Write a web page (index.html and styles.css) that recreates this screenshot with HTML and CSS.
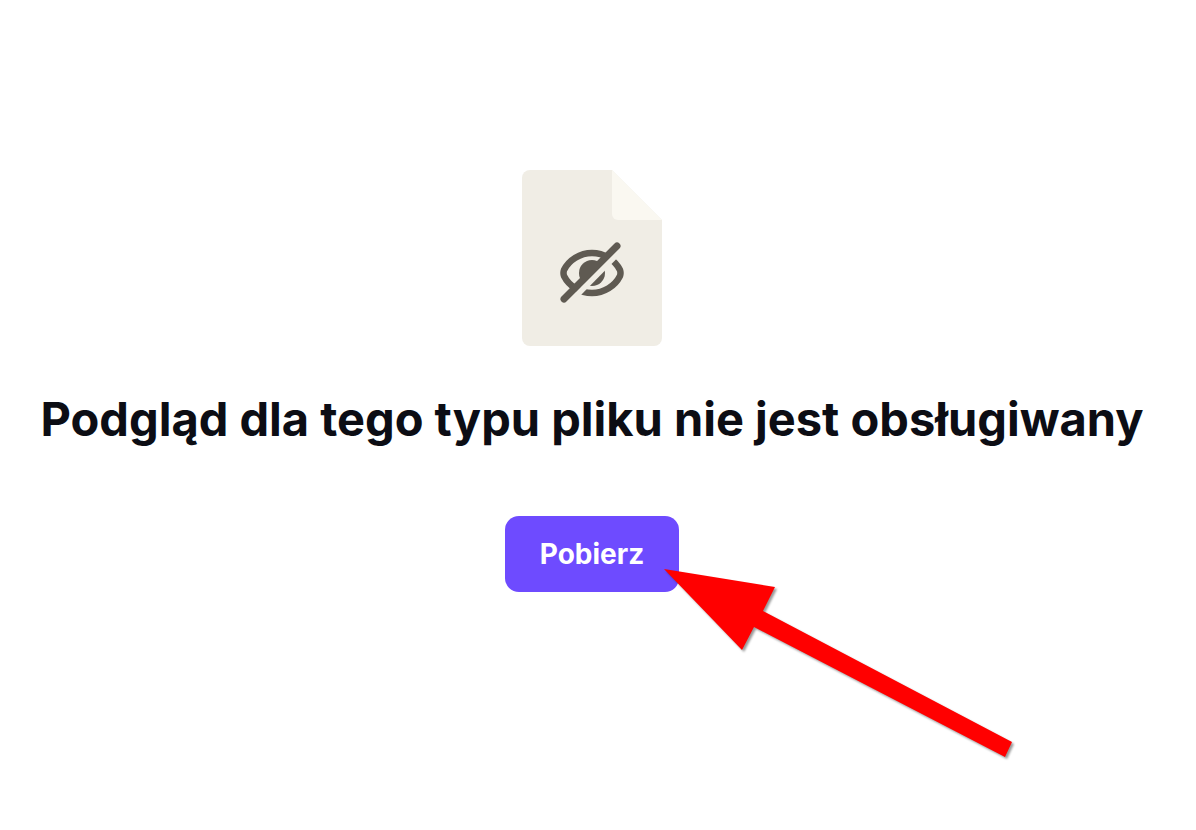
FILE: index.html
```html
<!DOCTYPE html>
<html lang="pl">
<head>
    <meta charset="UTF-8">
    <meta name="viewport" content="width=device-width, initial-scale=1">
    <title>Podgląd pliku</title>
    <link rel="stylesheet" href="styles.css">
</head>
<body>
<main class="preview">
    <svg class="file-icon" viewBox="0 0 140 176" aria-hidden="true">
        <path fill="#f0ede5" d="M8 0H90L140 50V168a8 8 0 0 1-8 8H8a8 8 0 0 1-8-8V8a8 8 0 0 1 8-8z"/>
        <path fill="#faf8f1" d="M90 0L140 50H96a6 6 0 0 1-6-6z"/>
        <!-- crossed out eye -->
        <path fill="none" stroke="#5f5a52" stroke-width="6.5" stroke-linejoin="round" d="M42 100C47 90 58 83 70 83S93 90 98 100Q99 103 98 106C93 116 82 123 70 123S47 116 42 106Q41 103 42 100z"/>
        <circle fill="#5f5a52" cx="70" cy="103" r="13"/>
        <path fill="none" stroke="#f0ede5" stroke-width="6" d="M46 134L100 79"/>
        <path fill="none" stroke="#5f5a52" stroke-width="7" stroke-linecap="round" d="M42 129L95 76"/>
    </svg>
    <h1 class="title">Podgląd dla tego typu pliku nie jest obsługiwany</h1>
    <div class="action">
        <button class="download" type="button">Pobierz</button>
        <svg class="arrow" viewBox="0 0 360 200" aria-hidden="true">
            <path fill="#ff0000" d="M4 4L115 22L103 46L352 177L345 192L94 62L82 85z"/>
        </svg>
    </div>
</main>
</body>
</html>
```
FILE: styles.css
```css
body{
    margin: 0;
    background: #fff;
    color: #0c0d14;
    font-family: Inter, "Liberation Sans", sans-serif;
}
.preview{
    box-sizing: border-box;
    min-height: 100vh;
    display: flex;
    flex-direction: column;
    align-items: center;
    padding: 170px 12px 0 0;
}
.file-icon{
    display: block;
    width: 140px;
    height: 176px;
}
.title{
    margin: 42px 0 66px;
    font-size: 47px;
    line-height: 62px;
    font-weight: 700;
    text-align: center;
}
.action{
    position: relative;
}
.download{
    display: block;
    padding: 20px 35px;
    border: 0;
    border-radius: 14px;
    background: #6e4bff;
    color: #fff;
    font-family: inherit;
    font-size: 28px;
    line-height: 36px;
    font-weight: 700;
    cursor: pointer;
}
/* points at the corner of the button */
.arrow{
    position: absolute;
    top: 49px;
    left: 155px;
    width: 360px;
    height: 200px;
    filter: drop-shadow(2px 2px 1px rgba(0, 0, 0, .4));
    pointer-events: none;
}
```
